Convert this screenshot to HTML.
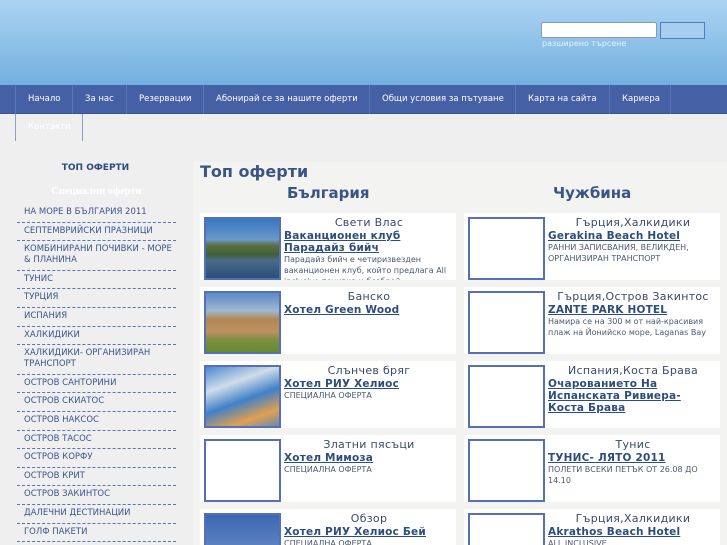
<!DOCTYPE html>
<html><head><meta charset="utf-8"><style>
*{margin:0;padding:0;box-sizing:border-box}
html,body{width:727px;height:545px;overflow:hidden}
body{background:#efefef;font-family:"DejaVu Sans","Liberation Sans",sans-serif;position:relative}
.hdr{position:absolute;left:0;top:0;width:727px;height:85px;background:linear-gradient(#acd3f3,#72b0de)}
.inp{position:absolute;left:541px;top:22px;width:116px;height:16px;background:#fff;border:1px solid #8a9ab0;border-radius:2px}
.btn{position:absolute;left:660px;top:22px;width:45px;height:17px;background:#a7cdef;border:1px solid #4f7cc0}
.adv{position:absolute;left:542px;top:39px;font-size:8px;color:#e6f1fb}
.nav{position:absolute;left:0;top:85px;width:727px;height:29px;background:#4660a6;border-bottom:1px solid #3c5395}
.nav span{position:absolute;top:0;height:29px;line-height:29px;font-size:8.5px;color:#fff;border-left:1px solid #5a74b6;padding-left:12px}
.k{position:absolute;left:15px;top:114px;width:68px;height:27px;border-left:1px solid #8aa0d0;border-right:1px solid #8aa0d0;font-size:8.5px;color:#fff;padding:8px 0 0 12px}
.side{position:absolute;left:17px;top:163px;width:159px}
.side .t{text-align:center;font-size:9px;font-weight:bold;color:#2f4a80;margin-left:-2px}
.side .s{text-align:center;font-size:10.5px;font-weight:bold;color:#fff;font-family:"Liberation Serif",serif;margin-top:13px;height:14px}
.side ul{list-style:none;margin-top:4px}
.side li{font-size:8.5px;color:#3a5590;padding:3px 0 4px 7px;border-bottom:1px dashed #5a74b6;line-height:11px;height:18.6px}
.side li.two{height:29.6px}
.main{position:absolute;left:193px;top:162px;width:534px;height:383px;background:#f3f3f2}
h1{position:absolute;left:200px;top:162px;font-size:16px;color:#3a5585}
h2{position:absolute;top:184px;font-size:15px;color:#3a5585;font-weight:bold}
.c{position:absolute;width:256px;height:67px;background:#fff;overflow:hidden}
.im{position:absolute;left:4px;top:4px;width:77px;height:63px;border:2px solid #5570b8;background:#fff}
.tx{position:absolute;left:84px;top:3px;width:170px}
.r{text-align:center;font-size:11px;color:#3a4a6a;line-height:13px;letter-spacing:0.3px}
.l{font-size:10.5px;font-weight:bold;color:#2d4d80;text-decoration:underline;line-height:12px;margin-top:1px;letter-spacing:0.2px}
.d{font-size:8px;color:#4a5a72;line-height:11px}
</style></head><body>
<div class="hdr"></div>
<div class="inp"></div><div class="btn"></div>
<div class="adv">разширено търсене</div>
<div class="nav">
<span style="left:15px;width:57px">Начало</span>
<span style="left:72px;width:54px">За нас</span>
<span style="left:126px;width:77px">Резервации</span>
<span style="left:203px;width:166px">Абонирай се за нашите оферти</span>
<span style="left:369px;width:146px">Общи условия за пътуване</span>
<span style="left:515px;width:94px">Карта на сайта</span>
<span style="left:609px;width:62px;border-right:1px solid #5a74b6">Кариера</span>
</div>
<div class="k">Контакти</div>
<div class="side">
<div class="t">ТОП ОФЕРТИ</div>
<div class="s">Специални оферти</div>
<ul>
<li>НА МОРЕ В БЪЛГАРИЯ 2011</li>
<li>СЕПТЕМВРИЙСКИ ПРАЗНИЦИ</li>
<li class="two">КОМБИНИРАНИ ПОЧИВКИ - МОРЕ &amp; ПЛАНИНА</li>
<li>ТУНИС</li>
<li>ТУРЦИЯ</li>
<li>ИСПАНИЯ</li>
<li>ХАЛКИДИКИ</li>
<li class="two">ХАЛКИДИКИ- ОРГАНИЗИРАН ТРАНСПОРТ</li>
<li>ОСТРОВ САНТОРИНИ</li>
<li>ОСТРОВ СКИАТОС</li>
<li>ОСТРОВ НАКСОС</li>
<li>ОСТРОВ ТАСОС</li>
<li>ОСТРОВ КОРФУ</li>
<li>ОСТРОВ КРИТ</li>
<li>ОСТРОВ ЗАКИНТОС</li>
<li>ДАЛЕЧНИ ДЕСТИНАЦИИ</li>
<li>ГОЛФ ПАКЕТИ</li>
<li>СПА ПОЧИВКИ</li>
</ul></div>
<div class="main"></div>
<h1>Топ оферти</h1>
<h2 style="left:287px">България</h2>
<h2 style="left:553px">Чужбина</h2>

<div class="c" style="left:200px;top:213px"><div class="im" style="background:linear-gradient(#3a78c0 0,#6a98c8 35%,#5a7040 45%,#40603a 60%,#4a6a8a 70%,#2a5078 100%)"></div><div class="tx"><div class="r">Свети Влас</div><div class="l">Ваканционен клуб Парадайз бийч</div><div class="d">Парадайз бийч е четиризвезден ваканционен клуб, който предлага All inclusive почивка и безброй</div></div></div>
<div class="c" style="left:200px;top:287px"><div class="im" style="background:linear-gradient(#5a8ac8 0,#a0b8d0 30%,#b08850 45%,#c09060 65%,#7a9040 80%,#6a8a30 100%)"></div><div class="tx"><div class="r">Банско</div><div class="l">Хотел Green Wood</div></div></div>
<div class="c" style="left:200px;top:361px"><div class="im" style="background:linear-gradient(160deg,#4a8ad0 0,#d0dce8 30%,#4080c8 55%,#e0a050 80%,#6a8ab0 100%)"></div><div class="tx"><div class="r">Слънчев бряг</div><div class="l">Хотел РИУ Хелиос</div><div class="d">СПЕЦИАЛНА ОФЕРТА</div></div></div>
<div class="c" style="left:200px;top:435px"><div class="im"></div><div class="tx"><div class="r">Златни пясъци</div><div class="l">Хотел Мимоза</div><div class="d">СПЕЦИАЛНА ОФЕРТА</div></div></div>
<div class="c" style="left:200px;top:509px"><div class="im" style="background:linear-gradient(#3a68b0,#7a9ad0)"></div><div class="tx"><div class="r">Обзор</div><div class="l">Хотел РИУ Хелиос Бей</div><div class="d">СПЕЦИАЛНА ОФЕРТА</div></div></div>

<div class="c" style="left:464px;top:213px"><div class="im"></div><div class="tx"><div class="r">Гърция,Халкидики</div><div class="l">Gerakina Beach Hotel</div><div class="d">РАННИ ЗАПИСВАНИЯ, ВЕЛИКДЕН, ОРГАНИЗИРАН ТРАНСПОРТ</div></div></div>
<div class="c" style="left:464px;top:287px"><div class="im"></div><div class="tx"><div class="r">Гърция,Остров Закинтос</div><div class="l">ZANTE PARK HOTEL</div><div class="d">Намира се на 300 м от най-красивия плаж на Йонийско море, Laganas Bay</div></div></div>
<div class="c" style="left:464px;top:361px"><div class="im"></div><div class="tx"><div class="r">Испания,Коста Брава</div><div class="l">Очарованието На Испанската Ривиера- Коста Брава</div></div></div>
<div class="c" style="left:464px;top:435px"><div class="im"></div><div class="tx"><div class="r">Тунис</div><div class="l">ТУНИС- ЛЯТО 2011</div><div class="d">ПОЛЕТИ ВСЕКИ ПЕТЪК ОТ 26.08 ДО 14.10</div></div></div>
<div class="c" style="left:464px;top:509px"><div class="im"></div><div class="tx"><div class="r">Гърция,Халкидики</div><div class="l">Akrathos Beach Hotel</div><div class="d">ALL INCLUSIVE</div></div></div>
</body></html>
